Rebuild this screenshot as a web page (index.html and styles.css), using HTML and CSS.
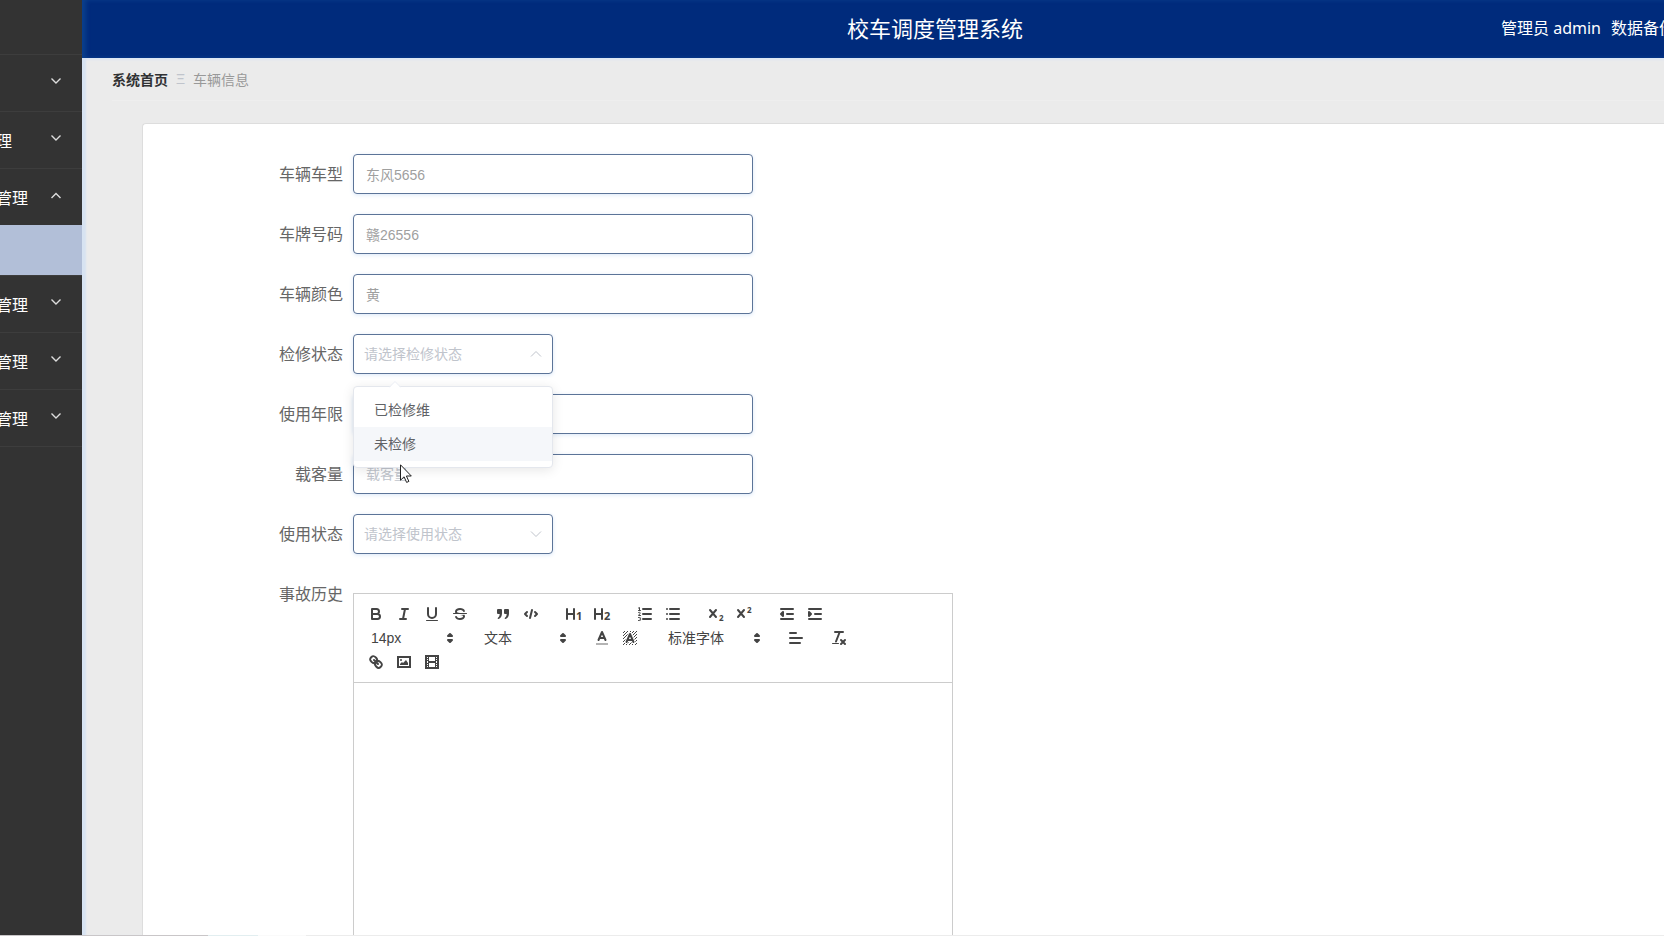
FILE: index.html
```html
<!DOCTYPE html>
<html lang="zh-CN">
<head>
<meta charset="utf-8">
<title>校车调度管理系统</title>
<link rel="stylesheet" href="styles.css">
</head>
<body>
<div class="app">
  <nav class="sidebar" aria-label="主菜单">
    <ul class="menu">
      <li class="menu-item menu-item-home"></li>
      <li class="menu-item"><button class="menu-title" type="button" aria-label="展开"><span></span><svg class="arrow" viewBox="0 0 12 12"><path d="M1.500 3.500 6 8l4.500-4.500"/></svg></button></li>
      <li class="menu-item"><button class="menu-title" type="button"><span>理</span><svg class="arrow" viewBox="0 0 12 12"><path d="M1.500 3.500 6 8l4.500-4.500"/></svg></button></li>
      <li class="menu-item">
        <button class="menu-title" type="button" aria-expanded="true"><span>管理</span><svg class="arrow" viewBox="0 0 12 12"><path d="M1.500 9 6 4.500 10.500 9"/></svg></button>
        <a class="submenu" href="#" aria-label="车辆信息"></a>
      </li>
      <li class="menu-item"><button class="menu-title" type="button"><span>管理</span><svg class="arrow" viewBox="0 0 12 12"><path d="M1.500 3.500 6 8l4.500-4.500"/></svg></button></li>
      <li class="menu-item"><button class="menu-title" type="button"><span>管理</span><svg class="arrow" viewBox="0 0 12 12"><path d="M1.500 3.500 6 8l4.500-4.500"/></svg></button></li>
      <li class="menu-item"><button class="menu-title" type="button"><span>管理</span><svg class="arrow" viewBox="0 0 12 12"><path d="M1.500 3.500 6 8l4.500-4.500"/></svg></button></li>
    </ul>
  </nav>
  <div class="main">
    <header class="header">
      <h1 class="title">校车调度管理系统</h1>
      <div class="user"><span>管理员 admin</span><a href="#">数据备份</a></div>
    </header>
    <div class="breadcrumb"><a href="#">系统首页</a><span class="sep">Ξ</span><span class="current">车辆信息</span></div>
    <form class="card">
      <div class="row"><label class="label" for="model">车辆车型</label><input class="input" id="model" type="text" value="东风5656"></div>
      <div class="row"><label class="label" for="plate">车牌号码</label><input class="input" id="plate" type="text" value="赣26556"></div>
      <div class="row"><label class="label" for="color">车辆颜色</label><input class="input" id="color" type="text" value="黄"></div>
      <div class="row"><label class="label" for="repair">检修状态</label>
        <div class="select-box">
          <select class="select" id="repair"><option>请选择检修状态</option></select>
          <svg class="caret" viewBox="0 0 14 14"><path d="M2 9.500 7 4.500l5 5"/></svg>
          <div class="popup">
            <svg class="popup-tip" viewBox="0 0 12 7"><path class="tip-fill" d="M0 7 6 1l6 6z"/><path class="tip-line" d="M0 6.500 6 .5l6 6"/></svg>
            <ul class="options"><li class="option">已检修维</li><li class="option option-hover">未检修</li></ul>
            <svg class="cursor" viewBox="0 0 12 19"><path d="M.5.8v15.400l3.600-3.400 2.500 5.600 2.300-1-2.500-5.400h4.900z"/></svg>
          </div>
        </div>
      </div>
      <div class="row"><label class="label" for="years">使用年限</label><input class="input" id="years" type="text"></div>
      <div class="row"><label class="label" for="capacity">载客量</label><input class="input" id="capacity" type="text" placeholder="载客量"></div>
      <div class="row"><label class="label" for="usage">使用状态</label>
        <div class="select-box">
          <select class="select" id="usage"><option>请选择使用状态</option></select>
          <svg class="caret" viewBox="0 0 14 14"><path d="m2 4.500 5 5 5-5"/></svg>
        </div>
      </div>
      <div class="row"><span class="label" id="history">事故历史</span>
        <div class="editor">
          <div class="toolbar">
            <div class="group">
              <button class="tool" type="button" aria-label="加粗"><svg viewBox="0 0 18 18"><path d="M5 4h4.500A2.500 2.500 0 0 1 12 6.500 2.500 2.500 0 0 1 9.500 9H5zM5 9h5.500a2.500 2.500 0 0 1 0 5H5z"/></svg></button>
              <button class="tool" type="button" aria-label="斜体"><svg viewBox="0 0 18 18"><path d="M7 4h6M5 14h6M8 14l2-10"/></svg></button>
              <button class="tool" type="button" aria-label="下划线"><svg viewBox="0 0 18 18"><path d="M5 3v6a4 4 0 0 0 8 0V3"/><rect class="fill" x="3" y="15" width="12" height="1" rx=".5"/></svg></button>
              <button class="tool" type="button" aria-label="删除线"><svg viewBox="0 0 18 18"><path class="thin" d="M15.500 8.500h-13"/><path class="fill" d="M9.007 8C6.542 7.791 6 7.519 6 6.500 6 5.792 7.283 5 9 5c1.571 0 2.765.679 2.969 1.309a1 1 0 0 0 1.900-.617C13.356 4.106 11.354 3 9 3 6.200 3 4 4.538 4 6.500a3.200 3.200 0 0 0 .5 1.843zM8.984 10C11.457 10.208 12 10.479 12 11.500c0 .708-1.283 1.500-3 1.500-1.571 0-2.765-.679-2.969-1.309a1 1 0 1 0-1.900.617C4.644 13.894 6.646 15 9 15c2.800 0 5-1.538 5-3.500a3.200 3.200 0 0 0-.5-1.843z"/></svg></button>
            </div>
            <div class="group">
              <button class="tool" type="button" aria-label="引用"><svg viewBox="0 0 18 18"><path class="fill" d="M4 4h3a1 1 0 0 1 1 1v3.500c0 2.500-1.200 4.700-3.500 5.500-.8.200-1.200-.7-.5-1.200C5 12 5.700 10.500 5.700 9H4a1 1 0 0 1-1-1V5a1 1 0 0 1 1-1zM11 4h3a1 1 0 0 1 1 1v3.500c0 2.500-1.200 4.700-3.500 5.500-.8.200-1.200-.7-.5-1.200 1-.8 1.700-2.300 1.700-3.800H11a1 1 0 0 1-1-1V5a1 1 0 0 1 1-1z"/></svg></button>
              <button class="tool" type="button" aria-label="代码"><svg viewBox="0 0 18 18"><path d="M5 7 3 9l2 2M13 7l2 2-2 2M10 5 8 13"/></svg></button>
            </div>
            <div class="group">
              <button class="tool" type="button" aria-label="标题 1"><svg viewBox="0 0 18 18"><path d="M2 4v10M9 4v10M2 9h7"/><text class="heading-num" x="11" y="15">1</text></svg></button>
              <button class="tool" type="button" aria-label="标题 2"><svg viewBox="0 0 18 18"><path d="M2 4v10M9 4v10M2 9h7"/><text class="heading-num" x="11" y="15">2</text></svg></button>
            </div>
            <div class="group">
              <button class="tool" type="button" aria-label="有序列表"><svg viewBox="0 0 18 18"><path d="M7 4h8M7 9h8M7 14h8"/><path class="thin" d="M2.500 3 3.500 2.500v3M2.500 5.500h2M2.500 7.500c1-.6 2 0 1.600.8L2.500 10.500h2M2.500 12.500h1.200c1.200 0 1.200 1.500 0 1.500 1.300 0 1.300 1.500 0 1.500H2.500"/></svg></button>
              <button class="tool" type="button" aria-label="无序列表"><svg viewBox="0 0 18 18"><path d="M6 4h9M6 9h9M6 14h9M3 4h0M3 9h0M3 14h0"/></svg></button>
            </div>
            <div class="group">
              <button class="tool" type="button" aria-label="下标"><svg viewBox="0 0 18 18"><path d="m3 5 6 7M9 5l-6 7"/><text class="script-num" x="12" y="16">2</text></svg></button>
              <button class="tool" type="button" aria-label="上标"><svg viewBox="0 0 18 18"><path d="m3 5 6 7M9 5l-6 7"/><text class="script-num" x="12" y="8">2</text></svg></button>
            </div>
            <div class="group">
              <button class="tool" type="button" aria-label="减少缩进"><svg viewBox="0 0 18 18"><path d="M3 14h12M3 4h12M9 9h6M5 7v4L3 9z"/></svg></button>
              <button class="tool" type="button" aria-label="增加缩进"><svg viewBox="0 0 18 18"><path d="M3 14h12M3 4h12M9 9h6M3 7v4l2-2z"/></svg></button>
            </div>
            <div class="group picker"><select class="picker-select" aria-label="字号"><option>14px</option></select><svg class="picker-arrows" viewBox="0 0 18 18"><path class="solid" d="m7 11 2 2 2-2zM7 7l2-2 2 2z"/></svg></div>
            <div class="group picker"><select class="picker-select" aria-label="段落格式"><option>文本</option></select><svg class="picker-arrows" viewBox="0 0 18 18"><path class="solid" d="m7 11 2 2 2-2zM7 7l2-2 2 2z"/></svg></div>
            <div class="group">
              <button class="tool" type="button" aria-label="文字颜色"><svg viewBox="0 0 18 18"><path class="faded" d="M3 15h12"/><path d="M5.500 11 9 3l3.500 8M11.600 9H6.400"/></svg></button>
              <button class="tool" type="button" aria-label="背景颜色"><svg viewBox="0 0 18 18"><path class="hatch" d="M2 4l2-2M2 7l5-5M2 10l8-8M2 13l11-11M2 16 16 2M5 16 16 5M8 16l8-8M11 16l5-5M14 16l2-2"/><path class="halo" d="M5.500 13 9 5l3.500 8M11.600 11H6.400"/><path d="M5.500 13 9 5l3.500 8M11.600 11H6.400"/></svg></button>
            </div>
            <div class="group picker picker-font"><select class="picker-select" aria-label="字体"><option>标准字体</option></select><svg class="picker-arrows" viewBox="0 0 18 18"><path class="solid" d="m7 11 2 2 2-2zM7 7l2-2 2 2z"/></svg></div>
            <div class="group"><button class="tool" type="button" aria-label="对齐"><svg viewBox="0 0 18 18"><path d="M3 9h12M3 14h10M3 4h6"/></svg></button></div>
            <div class="group"><button class="tool" type="button" aria-label="清除格式"><svg viewBox="0 0 18 18"><path d="M5 3h8M6 12.500 9.500 3.500M11 11l4 4M15 11l-4 4"/><rect class="fill" x="2" y="14" width="7" height="1" rx=".5"/></svg></button></div>
            <div class="group">
              <button class="tool" type="button" aria-label="链接"><svg viewBox="0 0 18 18"><path d="m7 7 4 4M8.900 4.577a3.476 3.476 0 0 1 .36 4.679A3.476 3.476 0 0 1 4.577 8.900C3.185 7.500 2.035 6.400 4.217 4.217S7.500 3.185 8.900 4.577zM13.423 9.100a3.476 3.476 0 0 0-4.679-.36 3.476 3.476 0 0 0 .36 4.679c1.392 1.392 2.500 2.542 4.679.36s1.032-3.287-.36-4.679z"/></svg></button>
              <button class="tool" type="button" aria-label="图片"><svg viewBox="0 0 18 18"><path class="miter" d="M3 4h12v10H3z"/><circle class="fill" cx="6" cy="7" r="1"/><path class="fill" d="M5 12v-1l2-2 1 1 3-3 2 3v2z"/></svg></button>
              <button class="tool" type="button" aria-label="视频"><svg viewBox="0 0 18 18"><path class="miter" d="M3 3h12v12H3z"/><path class="fill" d="M5 3h1v12H5zM12 3h1v12h-1zM5 8h8v2H5zM3 5h3v1H3zM3 7h3v1H3zM3 10h3v1H3zM3 12h3v1H3zM12 5h3v1h-3zM12 7h3v1h-3zM12 10h3v1h-3zM12 12h3v1h-3z"/></svg></button>
            </div>
          </div>
          <div class="content" contenteditable="true" role="textbox" aria-labelledby="history"></div>
        </div>
      </div>
    </form>
  </div>
</div>
</body>
</html>
```

FILE: styles.css
```css
* { box-sizing: border-box; }
body {
  margin: 0;
  overflow: hidden;
  font-family: "Liberation Sans", "Noto Sans CJK SC", sans-serif;
  font-size: 14px;
  color: #606266;
}
button, input, select { font: inherit; }
a { color: inherit; text-decoration: none; }
ul { margin: 0; padding: 0; list-style: none; }
svg { display: block; flex: none; }

.app {
  position: relative;
  display: flex;
  height: 100vh;
  overflow: hidden;
}
.app::after {
  content: "";
  position: absolute;
  left: 0;
  right: 0;
  bottom: 0;
  height: 1px;
  background: linear-gradient(90deg, #c9c6c8 208px, #e2eef0 208px 258px, #fafafa 258px 306px, #ececec 306px);
}

.sidebar {
  flex: 0 0 82px;
  overflow: hidden;
  background: #333;
}
.menu { margin-left: -4px; }
.menu-item { border-bottom: 1px solid #3d3d3d; }
.menu-item-home { height: 55px; }
.menu-title {
  display: flex;
  align-items: center;
  justify-content: space-between;
  width: 100%;
  height: 56px;
  padding: 0 20px 0 0;
  border: 0;
  background: none;
  color: #fff;
  font-size: 16px;
  line-height: 24px;
}
.menu-title span { padding-top: 4px; }
.arrow {
  width: 12px;
  height: 12px;
  margin-bottom: 4px;
  fill: none;
  stroke: #ddd;
  stroke-width: 1.4;
}
.submenu {
  display: block;
  height: 50px;
  background: #b2bfd8;
}

.main {
  flex: 1;
  min-width: 0;
  overflow: hidden;
  background: #ebebeb;
  box-shadow: inset 4px 0 2px #d7e3f2;
}
.header {
  display: grid;
  grid-template-columns: 1fr auto 1fr;
  align-items: center;
  width: calc(100% + 124px);
  height: 58px;
  padding-bottom: 2px;
  background: #002b7c;
  box-shadow: inset 4px 0 4px #0a3f8c, 0 1px 3px #d3e2f7;
  color: #fff;
  font-family: "Noto Sans", "Noto Sans CJK SC", sans-serif;
}
.title {
  grid-column: 2;
  margin: 0;
  font-size: 22px;
  font-weight: 400;
  line-height: 32px;
}
.user {
  display: flex;
  justify-content: flex-end;
  gap: 10px;
  padding-right: 113px;
  font-size: 16px;
  line-height: 24px;
  white-space: nowrap;
}
.breadcrumb {
  display: flex;
  align-items: center;
  height: 43px;
  margin: 0 0 22px 30px;
  padding-bottom: 1px;
  border-bottom: 1px solid #eee;
  color: #303133;
}
.breadcrumb a { font-weight: 700; }
.sep { margin: 0 8px; color: #c0c4cc; }
.current { color: #999; }

.card {
  min-height: calc(100vh - 123px);
  margin-left: 60px;
  padding: 30px 10px;
  border: 1px solid #ddd;
  border-right: 0;
  border-radius: 4px 0 0 0;
  background: #fff;
}
.row {
  display: flex;
  align-items: flex-start;
  margin-bottom: 18px;
}
.label {
  flex: 0 0 200px;
  padding-right: 10px;
  font-size: 16px;
  line-height: 42px;
  text-align: right;
  color: #666;
}
.input, .select {
  width: 400px;
  height: 40px;
  padding: 0 12px;
  border: 1px solid #5c7498;
  border-radius: 4px;
  outline: 0;
  background: #fff;
  box-shadow: 0 1px 4px #dbe8f8;
  color: #9f9f9f;
}
.input::placeholder { color: #c0c4cc; opacity: 1; }
.select-box {
  position: relative;
  width: 200px;
}
.select {
  display: block;
  width: 100%;
  padding: 0 10px;
  appearance: none;
  color: #c0c4cc;
}
.caret {
  position: absolute;
  right: 10px;
  top: 13px;
  width: 14px;
  height: 14px;
  fill: none;
  stroke: #c0c4cc;
  pointer-events: none;
}
.popup {
  position: absolute;
  z-index: 2;
  top: 52px;
  left: 0;
  width: 100%;
  padding: 6px 0;
  border: 1px solid #e4e7ed;
  border-radius: 4px;
  background: #fff;
  box-shadow: 0 2px 12px #0000001a;
}
.popup-tip {
  position: absolute;
  top: -6px;
  left: 35px;
  width: 12px;
  height: 7px;
}
.tip-fill { fill: #fff; }
.tip-line { fill: none; stroke: #ebeef5; }
.option {
  padding: 0 20px;
  line-height: 34px;
}
.option-hover { background: #f5f7fa; }
.cursor {
  position: absolute;
  top: 77px;
  left: 46px;
  width: 12px;
  height: 19px;
  fill: #fff;
  stroke: #222;
}

.editor {
  width: 600px;
  margin-top: 19px;
}
.toolbar {
  display: flex;
  flex-wrap: wrap;
  padding: 8px;
  border: 1px solid #ccc;
}
.group {
  display: flex;
  height: 24px;
  margin-right: 15px;
}
.tool {
  width: 28px;
  height: 24px;
  padding: 3px 5px;
  border: 0;
  background: none;
}
.tool svg, .picker-arrows {
  width: 18px;
  height: 18px;
  fill: none;
  stroke: #444;
  stroke-width: 2;
  stroke-linecap: round;
  stroke-linejoin: round;
}
.tool .fill { fill: #444; stroke: none; }
.picker-arrows .solid { fill: #444; }
.tool .thin { stroke-width: 1; }
.tool .miter { stroke-linejoin: miter; }
.tool .faded { opacity: .4; stroke-linecap: butt; }
.tool .hatch { stroke-width: 1; stroke-linecap: butt; }
.tool .halo { stroke: #fff; stroke-width: 4; }
.tool text {
  fill: #444;
  stroke: none;
  font-family: "Noto Sans", sans-serif;
  font-weight: 700;
}
.heading-num { font-size: 11px; }
.script-num { font-size: 8px; }
.picker {
  position: relative;
  width: 98px;
}
.picker-font { width: 108px; }
.picker-select {
  width: 100%;
  padding: 0 9px;
  border: 0;
  appearance: none;
  background: none;
  color: #444;
}
.picker-arrows {
  position: absolute;
  top: 3px;
  right: 1px;
  pointer-events: none;
}
.content {
  min-height: 400px;
  border: 1px solid #ccc;
  border-top: 0;
  outline: 0;
}
```
